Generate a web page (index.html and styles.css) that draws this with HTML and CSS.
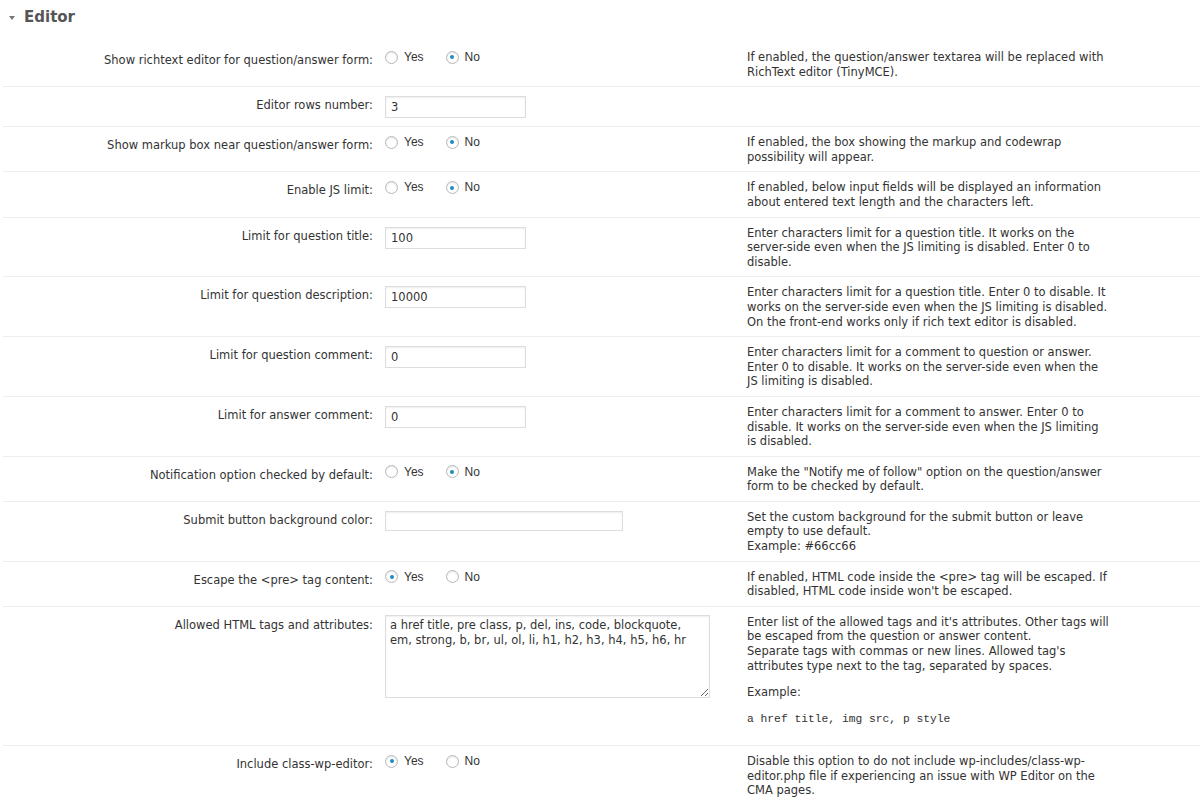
FILE: index.html
```html
<!DOCTYPE html>
<html lang="en">
<head>
  <meta charset="UTF-8">
  <meta name="viewport" content="width=device-width, initial-scale=1.0">
  <title>Editor settings</title>
  <link rel="stylesheet" href="styles.css">
</head>
<body>
  <div class="section">
    <h2 class="section-title">
      <svg class="caret" width="6" height="4" viewBox="0 0 6 4"><path d="M0 0 H6 L3 4 Z" fill="#777"/></svg>
      Editor
    </h2>

    <div class="settings">
      <div class="row">
        <div class="row-label">Show richtext editor for question/answer form:</div>
        <div class="row-field">
          <label class="choice"><input type="radio" name="richtext"> Yes</label>
          <label class="choice"><input type="radio" name="richtext" checked> No</label>
        </div>
        <div class="row-desc">If enabled, the question/answer textarea will be replaced with RichText editor (TinyMCE).</div>
      </div>

      <div class="row">
        <div class="row-label">Editor rows number:</div>
        <div class="row-field"><input type="text" class="text-input" value="3"></div>
        <div class="row-desc"></div>
      </div>

      <div class="row">
        <div class="row-label">Show markup box near question/answer form:</div>
        <div class="row-field">
          <label class="choice"><input type="radio" name="markup"> Yes</label>
          <label class="choice"><input type="radio" name="markup" checked> No</label>
        </div>
        <div class="row-desc">If enabled, the box showing the markup and codewrap possibility will appear.</div>
      </div>

      <div class="row">
        <div class="row-label">Enable JS limit:</div>
        <div class="row-field">
          <label class="choice"><input type="radio" name="jslimit"> Yes</label>
          <label class="choice"><input type="radio" name="jslimit" checked> No</label>
        </div>
        <div class="row-desc">If enabled, below input fields will be displayed an information about entered text length and the characters left.</div>
      </div>

      <div class="row">
        <div class="row-label">Limit for question title:</div>
        <div class="row-field"><input type="text" class="text-input" value="100"></div>
        <div class="row-desc">Enter characters limit for a question title. It works on the server-side even when the JS limiting is disabled. Enter 0 to disable.</div>
      </div>

      <div class="row">
        <div class="row-label">Limit for question description:</div>
        <div class="row-field"><input type="text" class="text-input" value="10000"></div>
        <div class="row-desc">Enter characters limit for a question title. Enter 0 to disable. It works on the server-side even when the JS limiting is disabled. On the front-end works only if rich text editor is disabled.</div>
      </div>

      <div class="row">
        <div class="row-label">Limit for question comment:</div>
        <div class="row-field"><input type="text" class="text-input" value="0"></div>
        <div class="row-desc">Enter characters limit for a comment to question or answer. Enter 0 to disable. It works on the server-side even when the JS limiting is disabled.</div>
      </div>

      <div class="row">
        <div class="row-label">Limit for answer comment:</div>
        <div class="row-field"><input type="text" class="text-input" value="0"></div>
        <div class="row-desc">Enter characters limit for a comment to answer. Enter 0 to disable. It works on the server-side even when the JS limiting is disabled.</div>
      </div>

      <div class="row">
        <div class="row-label">Notification option checked by default:</div>
        <div class="row-field">
          <label class="choice"><input type="radio" name="notify"> Yes</label>
          <label class="choice"><input type="radio" name="notify" checked> No</label>
        </div>
        <div class="row-desc">Make the "Notify me of follow" option on the question/answer form to be checked by default.</div>
      </div>

      <div class="row">
        <div class="row-label">Submit button background color:</div>
        <div class="row-field"><input type="text" class="text-input wide" value=""></div>
        <div class="row-desc">Set the custom background for the submit button or leave empty to use default.<br>Example: #66cc66</div>
      </div>

      <div class="row">
        <div class="row-label">Escape the &lt;pre&gt; tag content:</div>
        <div class="row-field">
          <label class="choice"><input type="radio" name="escape" checked> Yes</label>
          <label class="choice"><input type="radio" name="escape"> No</label>
        </div>
        <div class="row-desc">If enabled, HTML code inside the &lt;pre&gt; tag will be escaped. If disabled, HTML code inside won't be escaped.</div>
      </div>

      <div class="row">
        <div class="row-label">Allowed HTML tags and attributes:</div>
        <div class="row-field">
          <textarea class="text-area">a href title, pre class, p, del, ins, code, blockquote, em, strong, b, br, ul, ol, li, h1, h2, h3, h4, h5, h6, hr</textarea>
        </div>
        <div class="row-desc">
          <p>Enter list of the allowed tags and it's attributes. Other tags will be escaped from the question or answer content.<br>Separate tags with commas or new lines. Allowed tag's attributes type next to the tag, separated by spaces.</p>
          <p>Example:</p>
          <p class="example-code">a href title, img src, p style</p>
        </div>
      </div>

      <div class="row">
        <div class="row-label">Include class-wp-editor:</div>
        <div class="row-field">
          <label class="choice"><input type="radio" name="wpeditor" checked> Yes</label>
          <label class="choice"><input type="radio" name="wpeditor"> No</label>
        </div>
        <div class="row-desc">Disable this option to do not include wp-includes/class-wp-editor.php file if experiencing an issue with WP Editor on the CMA pages.</div>
      </div>
    </div>
  </div>
</body>
</html>
```

FILE: styles.css
```css
body {
  margin: 0;
  font-family: "DejaVu Sans", Verdana, sans-serif;
  font-size: 11.5px;
  color: #333;
  background-color: #fff;
}

.section-title {
  display: flex;
  align-items: center;
  gap: 9px;
  margin: 0;
  padding: 7px 0 15px 9px;
  font-size: 15px;
  line-height: 20px;
  font-weight: bold;
  color: #555;
}

.caret {
  margin-top: 1px;
}

.settings {
  margin-left: 3px;
}

.row {
  display: grid;
  grid-template-columns: 370px 350px 362px;
  column-gap: 12px;
  padding: 8px 0 7px;
  line-height: 14.6px;
}

.row + .row {
  border-top: 1px solid #ededed;
}

.row-label {
  text-align: right;
  padding-top: 3px;
}

.row-field {
  display: flex;
  align-items: flex-start;
}

.choice {
  display: flex;
  align-items: center;
  gap: 6px;
  margin-right: 22px;
  font-family: "Liberation Sans", Arial, sans-serif;
  font-size: 12px;
  color: #333;
}

.choice input {
  appearance: none;
  -webkit-appearance: none;
  display: grid;
  place-items: center;
  width: 13px;
  height: 13px;
  margin: 0;
  border: 1px solid #b4b9be;
  border-radius: 50%;
  background-color: #fff;
  box-shadow: inset 0 1px 2px rgba(0, 0, 0, 0.1);
}

.choice input:checked::before {
  content: "";
  width: 4px;
  height: 4px;
  border-radius: 50%;
  background-color: #1e8cbe;
}

.text-input {
  display: block;
  box-sizing: border-box;
  width: 141px;
  height: 22px;
  margin: 1px 0;
  padding: 0 5px;
  border: 1px solid #ddd;
  box-shadow: inset 0 1px 2px rgba(0, 0, 0, 0.07);
  font: inherit;
  color: #333;
}

.text-input.wide {
  width: 238px;
  height: 20px;
}

.text-area {
  display: block;
  box-sizing: border-box;
  width: 325px;
  height: 83px;
  margin: 0;
  padding: 2px 4px;
  border: 1px solid #ddd;
  box-shadow: inset 0 1px 2px rgba(0, 0, 0, 0.07);
  font: inherit;
  line-height: 15px;
  color: #333;
}

.row-desc p {
  margin: 12px 0 0;
}

.row-desc p:first-child {
  margin-top: 0;
}

.row-desc .example-code {
  margin-bottom: 11.5px;
  font-family: "Liberation Mono", "Courier New", monospace;
  font-size: 11.3px;
}
```
